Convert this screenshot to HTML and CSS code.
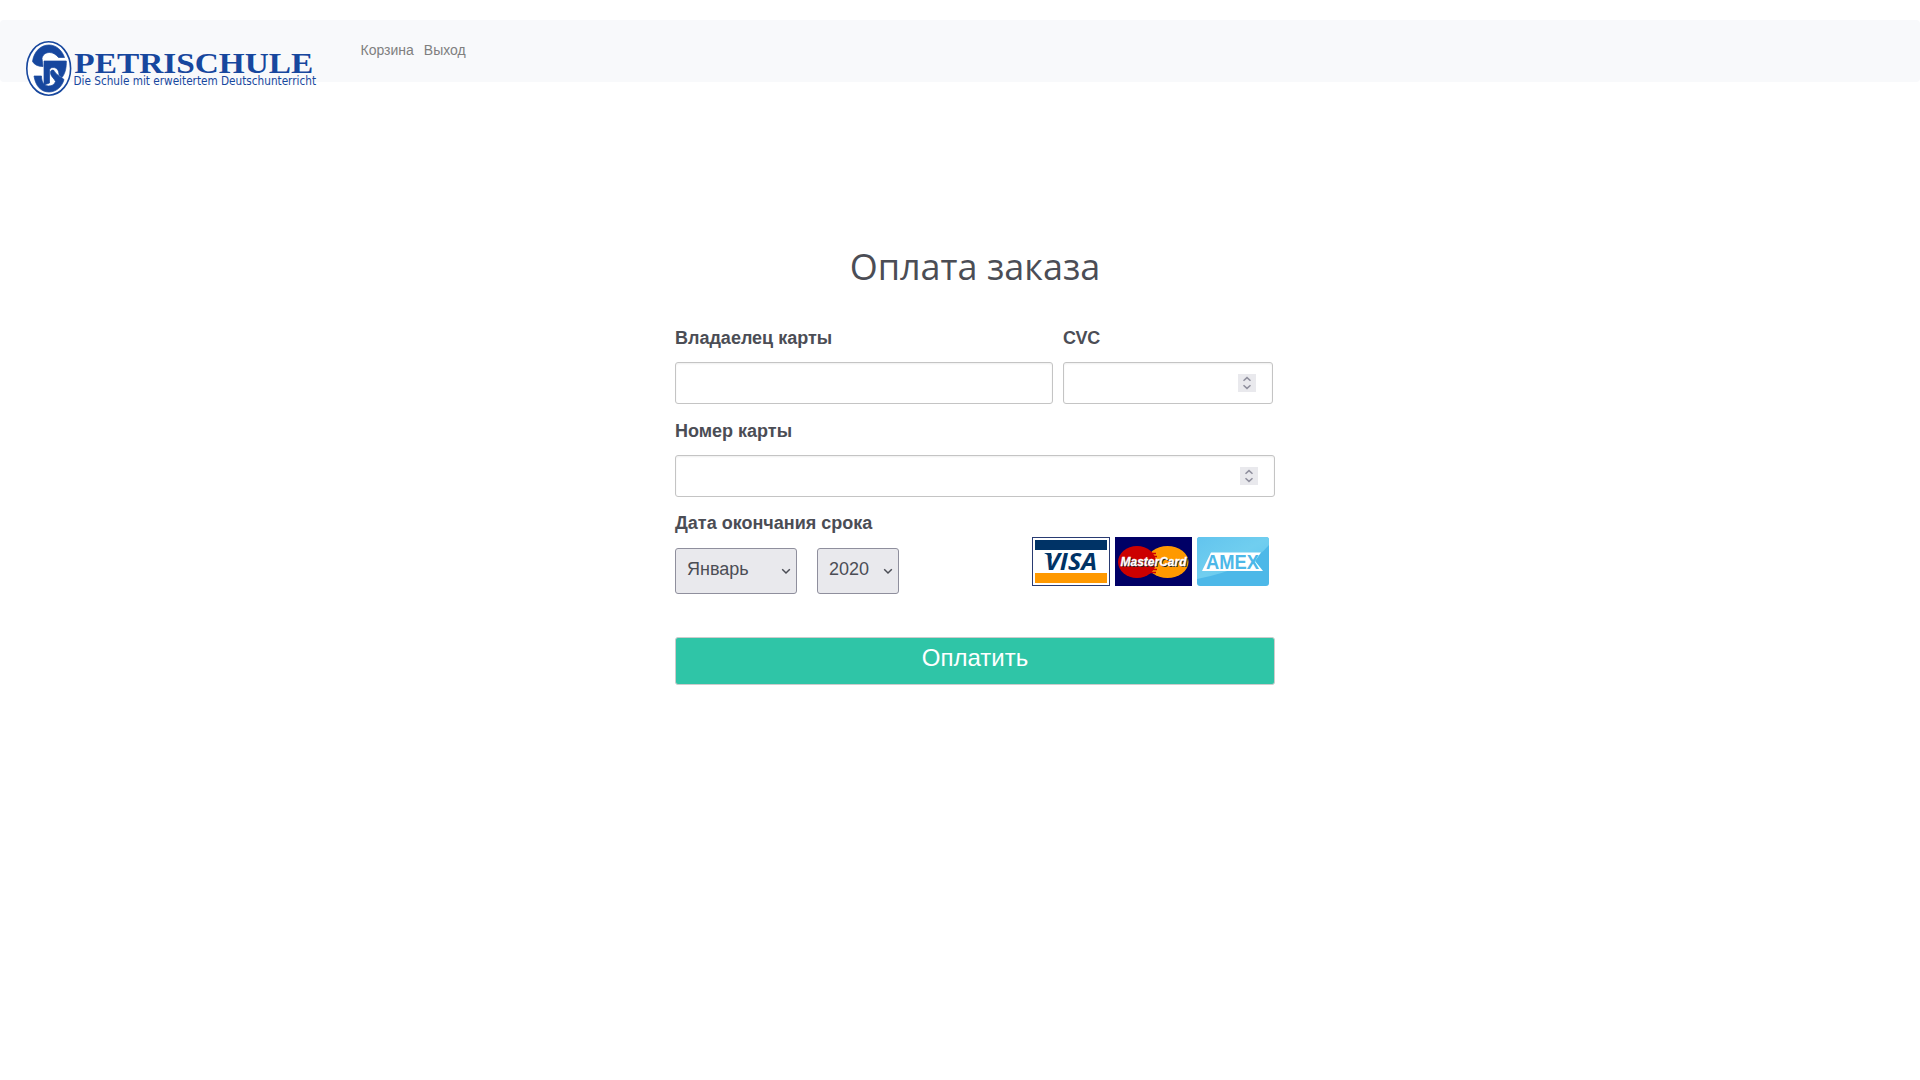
FILE: index.html
```html
<!DOCTYPE html>
<html lang="ru">
<head>
<meta charset="utf-8">
<title>Оплата заказа</title>
<link rel="stylesheet" href="styles.css">
</head>
<body>
<nav class="navbar">
  <a class="brand" href="#">
    <svg width="296" height="56" viewBox="26 41 296 56">
      <ellipse cx="48.700" cy="68.500" rx="21.900" ry="26.700" fill="#fff" stroke="#17479e" stroke-width="1.600"/>
      <g fill="#17479e" stroke="#17479e" stroke-width=".7">
        <path d="M32.500 61.500C34 51 41 45 49 45C56 45 62 50 64.500 57.500H58.500C56 54.500 53 52.500 49.500 52.500C45.500 52.500 42.500 55 42 58.500L43 66.500C38 66.500 34.500 65 32.500 61.500Z"/>
        <path d="M44 61H66.300C66.500 67 65.500 73 62 77.500L59 75C59 70 56.500 67.500 53 67.500C50.500 67.500 49.500 69 49.500 71V83L44 85Z"/>
        <path d="M34 76H41.500C41.500 82 44 86 48.500 86C52 86 54.500 84.500 55.500 81.500C54 78 50.500 76.500 50.500 72.500C50.500 70.500 52 69.500 54 70.500C55.500 74.500 60 76 64 79.500C62 87 56 92 49 92C41 92 35.500 86 34 76Z"/>
      </g>
      <text class="brand-name" x="74.300" y="73.300" textLength="239" lengthAdjust="spacingAndGlyphs">PETRISCHULE</text>
      <text class="brand-note" x="73.500" y="85.300" textLength="242.500" lengthAdjust="spacingAndGlyphs">Die Schule mit erweitertem Deutschunterricht</text>
    </svg>
  </a>
  <a class="nav-link" href="#">Корзина</a>
  <a class="nav-link" href="#">Выход</a>
</nav>
<main class="payment">
  <h1 class="title">Оплата заказа</h1>
  <form class="form">
    <div class="row">
      <div class="field owner"><label class="label">Владаелец карты</label><div class="input"></div></div>
      <div class="field cvc"><label class="label cvc-label">CVC</label>
        <div class="input"><svg class="spinner" viewBox="0 0 18 18"><path d="M5.500 6.800L9 3.600L12.500 6.800M5.500 11.200L9 14.400L12.500 11.200"/></svg></div>
      </div>
    </div>
    <div class="field"><label class="label">Номер карты</label>
      <div class="input"><svg class="spinner" viewBox="0 0 18 18"><path d="M5.500 6.800L9 3.600L12.500 6.800M5.500 11.200L9 14.400L12.500 11.200"/></svg></div>
    </div>
    <div class="row expiry">
      <div class="field"><label class="label date-label">Дата окончания срока</label>
        <div class="selects">
          <div class="select month"><span>Январь</span><svg class="chevron" viewBox="0 0 10 7"><path d="M1.200 1.300L5 5L8.800 1.300"/></svg></div>
          <div class="select year"><span>2020</span><svg class="chevron" viewBox="0 0 10 7"><path d="M1.200 1.300L5 5L8.800 1.300"/></svg></div>
        </div>
      </div>
      <div class="cards">
        <svg width="78" height="49" viewBox="0 0 78 49">
          <rect x=".5" y=".5" width="77" height="48" fill="#fff" stroke="#293b72"/>
          <path d="M3 3H75V13H3Z" fill="#036"/><path d="M3 36H75V46H3Z" fill="#f90"/>
          <text class="visa" x="13" y="33" textLength="52" lengthAdjust="spacingAndGlyphs">VISA</text>
          <path d="M12 16H19L20 22Q17 18 12 16Z" fill="#036"/>
        </svg>
        <svg width="77" height="49" viewBox="0 0 77 49">
          <path d="M0 0H77V49H0Z" fill="#006"/>
          <ellipse cx="52.500" cy="25" rx="21" ry="16" fill="#f90"/>
          <ellipse cx="22" cy="25" rx="19" ry="16" fill="#c00"/>
          <path d="M35 16.500H41M34 19.500H42M33 32.500H42M35 35.500H41" stroke="#c00" stroke-width="1.300"/>
          <text class="mc mc-shadow" x="6.500" y="30" textLength="66" lengthAdjust="spacingAndGlyphs">MasterCard</text>
          <text class="mc" x="5.500" y="29" textLength="66" lengthAdjust="spacingAndGlyphs">MasterCard</text>
        </svg>
        <svg width="72" height="49" viewBox="0 0 72 49">
          <defs><linearGradient id="sheen" x1="0" y1="0" x2="1" y2="1"><stop offset="0" stop-color="#62c4ee"/><stop offset=".5" stop-color="#70ceef"/><stop offset="1" stop-color="#5dc5ef"/></linearGradient></defs>
          <rect width="72" height="49" rx="3" fill="#4db8e8"/>
          <path d="M3 0H69Q72 0 72 3V8Q52 32 0 42V3Q0 0 3 0Z" fill="url(#sheen)"/>
          <path d="M14 15.500H64L58 24L66 34H5Z" fill="#fff"/>
          <text class="amex" x="9" y="32" textLength="53" lengthAdjust="spacingAndGlyphs">AMEX</text>
        </svg>
      </div>
    </div>
    <button class="submit" type="button">Оплатить</button>
  </form>
</main>
</body>
</html>
```
FILE: styles.css
```css
* { box-sizing: border-box; }
body { margin: 0; padding-top: 20px; background: #fff; color: #4b4d55; font-family: "Liberation Sans", Arial, sans-serif; }
.navbar { display: flex; align-items: flex-start; height: 62px; padding: 21px 26px 0 25.5px; background: #f8f9fb; border-radius: 4px; }
.brand { display: block; width: 335px; height: 56px; }
.brand svg, .cards svg { display: block; overflow: visible; }
.brand-name { font: bold 29.5px "Liberation Serif", serif; fill: #17479e; }
.brand-note { font: 12px "DejaVu Sans", sans-serif; fill: #17479e; }
.nav-link { margin-right: 10px; font-size: 14px; line-height: 18px; color: #7f7f7f; text-decoration: none; }
.payment { width: 600px; margin: 158px 0 0 675px; }
.title { margin: 0; font: 400 36px/54px "Open Sans", sans-serif; text-align: center; }
.form { padding-top: 32px; }
.row { display: flex; gap: 10px; }
.owner { width: 378px; }
.cvc { width: 210px; }
.label { display: block; height: 36px; font-size: 18px; font-weight: bold; line-height: 24px; white-space: nowrap; }
.cvc-label { letter-spacing: -.4px; }
.date-label { line-height: 22px; }
.input { display: flex; align-items: center; justify-content: flex-end; height: 42px; margin-bottom: 15px; padding-right: 16px; border: 1px solid #c4c4c4; border-radius: 3px; box-shadow: inset 0 1px 2px #0001; }
.spinner { width: 18px; height: 18px; background: #e9e9ed; }
.spinner path { fill: none; stroke: #8f8f9d; stroke-width: 1.5; }
.expiry { height: 125px; justify-content: space-between; }
.selects { display: flex; gap: 20px; }
.select { display: flex; align-items: center; justify-content: space-between; height: 46px; padding: 0 5px 0 11px; background: #e9e9ed; border: 1px solid #8f8f9d; border-radius: 3px; font-size: 18px; }
.select span { padding-bottom: 3px; }
.month { width: 122px; }
.year { width: 82px; }
.chevron { width: 10px; height: 7px; }
.chevron path { fill: none; stroke: #4b4d55; stroke-width: 1.5; }
.cards { display: flex; gap: 5px; padding: 25px 6px 0 0; }
.visa { font: italic bold 24px "Open Sans", sans-serif; fill: #036; }
.mc { font: italic bold 13px "Liberation Sans", sans-serif; fill: #fff; stroke: #fff; stroke-width: .3px; }
.mc-shadow { fill: #222; stroke: none; }
.amex { font: bold 20px "Liberation Sans", sans-serif; fill: #4db8e8; }
.submit { display: block; width: 600px; height: 48px; padding: 0 0 6px; background: #2fc5a7; border: 1px solid #ccc; border-radius: 3px; color: #fff; font: 24px "Liberation Sans", Arial, sans-serif; }
```
